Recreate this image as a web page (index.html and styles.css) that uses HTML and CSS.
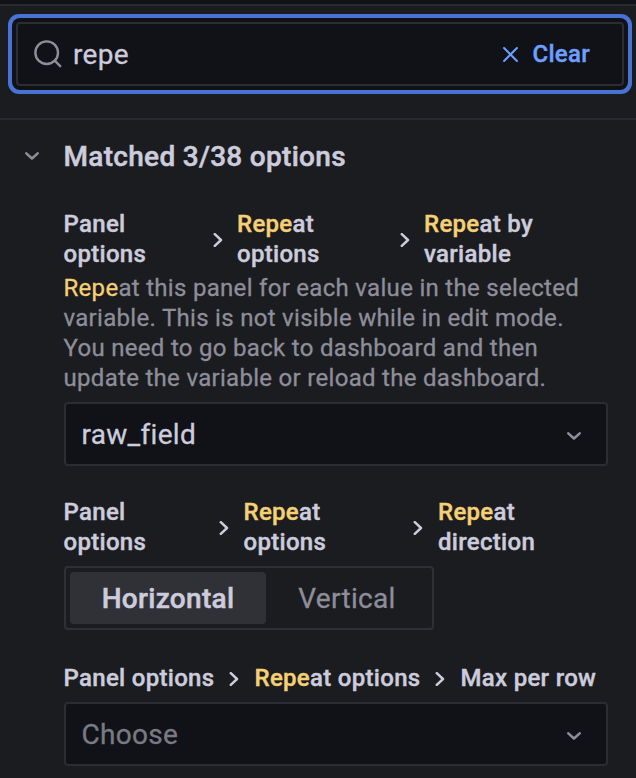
FILE: index.html
```html
<!DOCTYPE html>
<html lang="en">
<head>
<meta charset="utf-8">
<title>Panel options</title>
<link rel="stylesheet" href="styles.css">
</head>
<body>
<svg class="sprite" aria-hidden="true">
  <symbol id="down" viewBox="0 0 14 8"><path d="M1.3 1.3 7 6.5l5.7-5.2"/></symbol>
  <symbol id="right" viewBox="0 0 10 14"><path d="M1.8 1.2 8 7l-6.2 5.8"/></symbol>
</svg>
<header class="search-area">
  <div class="search">
    <svg class="search-icon" viewBox="0 0 28 28"><circle cx="12.7" cy="12.7" r="11.3"/><path d="m20.7 20.7 5.5 5.5"/></svg>
    <span class="query">repe</span>
    <button class="clear"><svg viewBox="0 0 14 14"><path d="m1 1 12 12M13 1 1 13"/></svg>Clear</button>
  </div>
</header>
<main>
  <h2 class="heading"><svg class="down"><use href="#down"/></svg>Matched 3/38 options</h2>
  <section class="option by-variable">
    <div class="crumbs">
      <span class="first">Panel options</span><svg class="right"><use href="#right"/></svg>
      <span class="second"><mark>Repe</mark>at options</span><svg class="right"><use href="#right"/></svg>
      <span class="third"><mark>Repe</mark>at by variable</span>
    </div>
    <p class="description"><mark>Repe</mark>at this panel for each value in the selected variable. This is not visible while in edit mode. You need to go back to dashboard and then update the variable or reload the dashboard.</p>
    <div class="select">raw_field<svg class="down"><use href="#down"/></svg></div>
  </section>
  <section class="option direction">
    <div class="crumbs">
      <span class="first">Panel options</span><svg class="right"><use href="#right"/></svg>
      <span class="second"><mark>Repe</mark>at options</span><svg class="right"><use href="#right"/></svg>
      <span class="third"><mark>Repe</mark>at direction</span>
    </div>
    <div class="radios"><span class="radio active">Horizontal</span><span class="radio">Vertical</span></div>
  </section>
  <section class="option per-row">
    <div class="crumbs">
      <span class="first">Panel options</span><svg class="right"><use href="#right"/></svg>
      <span class="second"><mark>Repe</mark>at options</span><svg class="right"><use href="#right"/></svg>
      <span class="third">Max per row</span>
    </div>
    <div class="select placeholder">Choose<svg class="down"><use href="#down"/></svg></div>
  </section>
</main>
</body>
</html>
```
FILE: styles.css
```css
* { box-sizing: border-box; }
body {
  margin: 0;
  height: 778px;
  overflow: hidden;
  border-top: 4px solid #111217;
  background: #1b1c20;
  color: #ccccdc;
  font: 400 28px/44px Roboto, sans-serif;
  letter-spacing: 0.3px;
  -webkit-text-stroke: 0.3px;
}
svg { flex: none; fill: none; stroke: currentColor; stroke-width: 2.5; stroke-linecap: round; stroke-linejoin: round; }
.sprite { display: none; }
mark { background: none; color: #f5d074; }
.search-area {
  height: 116px;
  padding: 16px 12px 0 16px;
  border: solid #292a2f;
  border-width: 2px 0;
}
.search {
  display: flex;
  align-items: center;
  height: 64px;
  padding: 0 32px 0 16px;
  border: 2px solid #2c2d32;
  border-radius: 4px;
  background: #111217;
  box-shadow: 0 0 0 4px #111217, 0 0 0 8px #4973d3;
}
.search-icon { width: 28px; height: 28px; color: #8e8e9a; stroke-width: 2.4; }
.query { flex: 1; margin-left: 11px; padding-top: 2px; }
.clear {
  display: flex;
  align-items: center;
  gap: 14.5px;
  padding: 0;
  border: 0;
  background: none;
  color: #6e9fff;
  font: 500 24px/32px Roboto, sans-serif;
  letter-spacing: 0.3px;
  -webkit-text-stroke: 0.4px;
}
.clear svg { width: 15px; height: 15px; stroke-width: 1.9; }
main { padding: 15px 28px 0 24px; }
.heading {
  display: flex;
  align-items: center;
  gap: 23.5px;
  margin: 0;
  font: 500 28px/44px Roboto, sans-serif;
  letter-spacing: 0.3px;
  -webkit-text-stroke: 0.5px;
}
.down { width: 14px; height: 8px; margin: 0 1px; color: #8e8e9a; }
.heading .down { margin-bottom: 2px; }
.select .down { margin-top: 2px; }
.option { margin-left: 39.5px; }
.crumbs {
  display: flex;
  align-items: center;
  font-weight: 500;
  font-size: 24px;
  line-height: 30px;
  letter-spacing: 0.3px;
  -webkit-text-stroke: 0.4px;
}
.right { width: 10px; height: 14px; margin-top: 1px; }
.by-variable { margin-top: 30px; }
.by-variable .first { width: 149px; }
.by-variable .second { width: 162.5px; margin-left: 14.5px; }
.by-variable .third { width: 120px; margin-left: 14.5px; }
.description {
  margin: 4px 0 9px;
  color: #8e8e9a;
  font-size: 24px;
  line-height: 30px;
  letter-spacing: 0.3px;
}
.select {
  display: flex;
  align-items: center;
  justify-content: space-between;
  height: 64px;
  margin-left: 0.5px;
  padding: 2px 24px 0 15.5px;
  border: 2px solid #2c2d32;
  border-radius: 4px;
  background: #111217;
}
.placeholder { color: #7a7a85; }
.direction { margin-top: 31px; }
.direction .first { width: 155px; padding-right: 10px; }
.direction .second { width: 169px; margin-left: 15px; padding-right: 10px; }
.direction .third { width: 120px; margin-left: 15.5px; }
.radios {
  display: flex;
  width: 370px;
  height: 64px;
  margin: 9px 0 0 0.5px;
  padding: 4px;
  border: 2px solid #2f3036;
  border-radius: 4px;
}
.radio { width: 196px; padding-top: 1px; border-radius: 4px; color: #8e8e9a; line-height: 51px; text-align: center; }
.radio:last-child { width: 162px; }
.active { background: #303136; color: #ccccdc; font-weight: 500; -webkit-text-stroke: 0.5px; }
.per-row { margin-top: 33px; }
.per-row .crumbs { white-space: nowrap; }
.per-row .first { width: 165.5px; }
.per-row .second { width: 180.5px; margin-left: 15.5px; }
.per-row .third { margin-left: 15.5px; }
.per-row .select { margin-top: 9px; }
```
